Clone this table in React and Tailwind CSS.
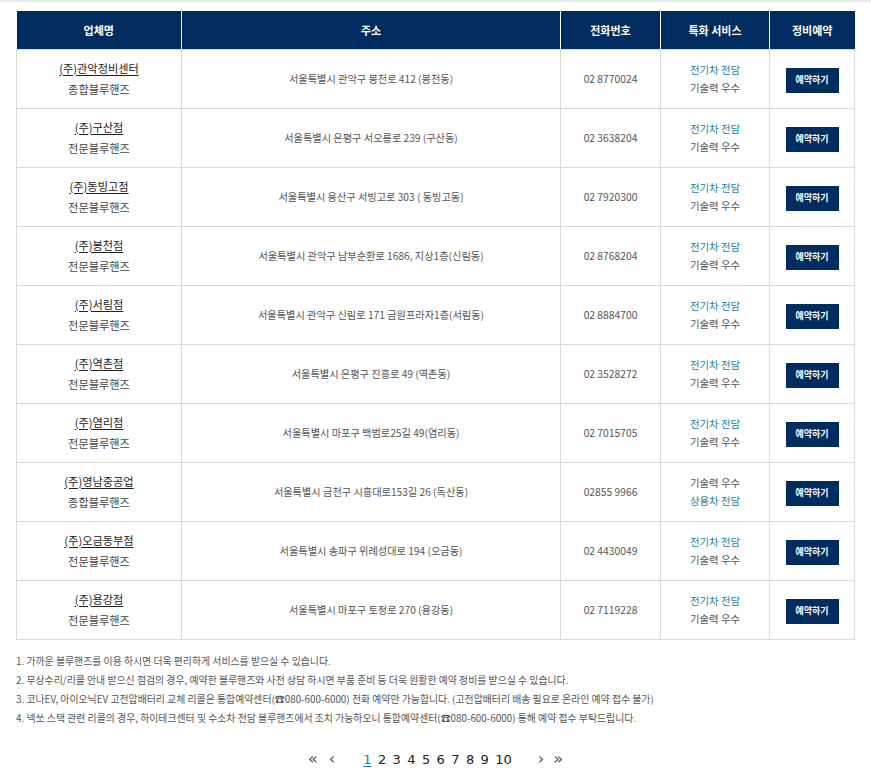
const shops = [
  { name: '(주)관악정비센터', type: '종합블루핸즈', addr: '서울특별시 관악구 봉천로 412 (봉천동)', tel: '02 8770024', svc: ['ev', 'tech'] },
  { name: '(주)구산점', type: '전문블루핸즈', addr: '서울특별시 은평구 서오릉로 239 (구산동)', tel: '02 3638204', svc: ['ev', 'tech'] },
  { name: '(주)동빙고점', type: '전문블루핸즈', addr: '서울특별시 용산구 서빙고로 303 ( 동빙고동)', tel: '02 7920300', svc: ['ev', 'tech'] },
  { name: '(주)봉천점', type: '전문블루핸즈', addr: '서울특별시 관악구 남부순환로 1686, 지상1층(신림동)', tel: '02 8768204', svc: ['ev', 'tech'] },
  { name: '(주)서림점', type: '전문블루핸즈', addr: '서울특별시 관악구 신림로 171 금원프라자1층(서림동)', tel: '02 8884700', svc: ['ev', 'tech'] },
  { name: '(주)역촌점', type: '전문블루핸즈', addr: '서울특별시 은평구 진흥로 49 (역촌동)', tel: '02 3528272', svc: ['ev', 'tech'] },
  { name: '(주)염리점', type: '전문블루핸즈', addr: '서울특별시 마포구 백범로25길 49(염리동)', tel: '02 7015705', svc: ['ev', 'tech'] },
  { name: '(주)영남중공업', type: '종합블루핸즈', addr: '서울특별시 금천구 시흥대로153길 26 (독산동)', tel: '02855 9966', svc: ['tech', 'truck'] },
  { name: '(주)오금동부점', type: '전문블루핸즈', addr: '서울특별시 송파구 위례성대로 194 (오금동)', tel: '02 4430049', svc: ['ev', 'tech'] },
  { name: '(주)용강점', type: '전문블루핸즈', addr: '서울특별시 마포구 토정로 270 (용강동)', tel: '02 7119228', svc: ['ev', 'tech'] },
];

const svcLabel = {
  ev: { text: '전기차 전담', cls: 'text-[#1a7fa3]' },
  truck: { text: '상용차 전담', cls: 'text-[#1a7fa3]' },
  tech: { text: '기술력 우수', cls: 'text-[#555]' },
};

const notes = [
  '1. 가까운 블루핸즈를 이용 하시면 더욱 편리하게 서비스를 받으실 수 있습니다.',
  '2. 무상수리/리콜 안내 받으신 점검의 경우, 예약한 블루핸즈와 사전 상담 하시면 부품 준비 등 더욱 원활한 예약 정비를 받으실 수 있습니다.',
  '3. 코나EV, 아이오닉EV 고전압배터리 교체 리콜은 통합예약센터(☎080-600-6000) 전화 예약만 가능합니다. (고전압배터리 배송 필요로 온라인 예약 접수 불가)',
  '4. 넥쏘 스택 관련 리콜의 경우, 하이테크센터 및 수소차 전담 블루핸즈에서 조치 가능하오니 통합예약센터(☎080-600-6000) 통해 예약 접수 부탁드립니다.',
];

const font = "font-['Noto_Sans_CJK_KR','Noto_Sans',sans-serif]";

export default function App() {
  return (
    <div className={`min-h-[779px] bg-white ${font}`}>
      <div className="h-[2px] bg-[#ebebeb]" />
      <div className="px-4 pt-[9px]">
        <table className="w-[838px] table-fixed border-collapse text-center">
          <colgroup>
            <col className="w-[165px]" />
            <col className="w-[379px]" />
            <col className="w-[100px]" />
            <col className="w-[109px]" />
            <col className="w-[85px]" />
          </colgroup>
          <thead>
            <tr className="h-[38px] bg-[#002c5f] text-[11px] font-bold text-white">
              <th className="border-r border-white">업체명</th>
              <th className="border-r border-white">주소</th>
              <th className="border-r border-white">전화번호</th>
              <th className="border-r border-white">특화 서비스</th>
              <th>정비예약</th>
            </tr>
          </thead>
          <tbody>
            {shops.map((s) => (
              <tr key={s.name} className="h-[59px]">
                <td className="border border-[#dedad3]">
                  <div className="text-[11.2px] leading-[21px] text-[#222] underline underline-offset-2">{s.name}</div>
                  <div className="text-[11.2px] leading-[21px] text-[#444]">{s.type}</div>
                </td>
                <td className="border border-[#dedad3] text-[10.2px] text-[#555]">{s.addr}</td>
                <td className="border border-[#dedad3] text-[10.3px] text-[#555]">{s.tel}</td>
                <td className="border border-[#dedad3] text-[10.4px] leading-[18px]">
                  {s.svc.map((k) => (
                    <div key={k} className={svcLabel[k].cls}>{svcLabel[k].text}</div>
                  ))}
                </td>
                <td className="border border-[#dedad3]">
                  <button className="h-[25px] w-[53px] bg-[#002c5f] text-[9px] font-bold text-white">예약하기</button>
                </td>
              </tr>
            ))}
          </tbody>
        </table>

        <ul className="mt-[12px] text-[9.9px] leading-[19px] text-[#555]">
          {notes.map((n) => (
            <li key={n}>{n}</li>
          ))}
        </ul>

        <div className="mt-[22px] flex items-center justify-center font-['DejaVu_Sans',sans-serif] text-[13px] text-[#222]">
          <div className="flex items-center gap-[11px] text-[#555]">
            <span className="text-[16px] leading-none">«</span>
            <span className="text-[16px] leading-none">‹</span>
          </div>
          <div className="ml-[28px] flex items-center gap-[6.4px]">
            {[1, 2, 3, 4, 5, 6, 7, 8, 9, 10].map((p) => (
              <span key={p} className={p === 1 ? 'text-[#1a7fa3] underline underline-offset-2' : ''}>{p}</span>
            ))}
          </div>
          <div className="ml-[26px] flex items-center gap-[9px] text-[#555]">
            <span className="text-[16px] leading-none">›</span>
            <span className="text-[16px] leading-none">»</span>
          </div>
        </div>
      </div>
    </div>
  );
}
